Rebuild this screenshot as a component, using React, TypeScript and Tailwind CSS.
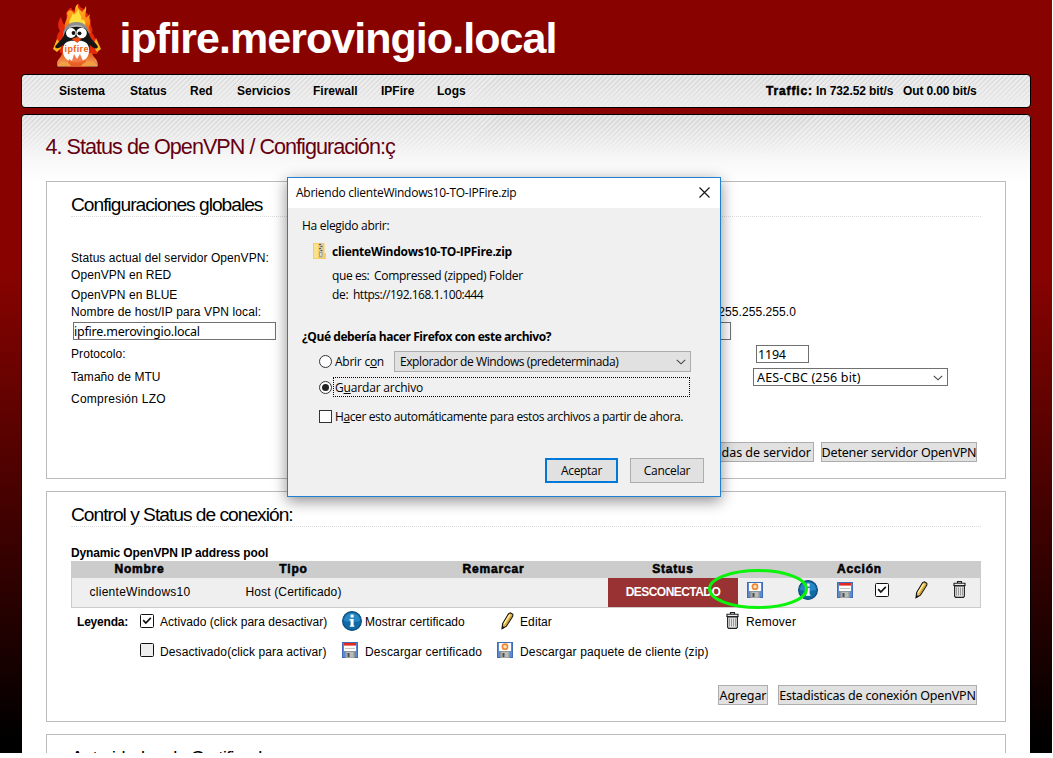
import React from "react";

const sans = "font-['Liberation_Sans',sans-serif]";
const ui = "font-['Open_Sans',sans-serif]";
const form = "font-['Noto_Sans',sans-serif]";

function Logo() {
  return (
    <svg width="52" height="66" viewBox="0 0 52 66" className="block">
      <defs>
        <linearGradient id="flame" x1="0" y1="0" x2="0" y2="1">
          <stop offset="0" stopColor="#ffbe20" />
          <stop offset=".6" stopColor="#ff8a14" />
          <stop offset="1" stopColor="#f2500c" />
        </linearGradient>
        <linearGradient id="base" x1="0" y1="0" x2="0" y2="1">
          <stop offset="0" stopColor="#e8581c" />
          <stop offset=".65" stopColor="#f0934a" />
          <stop offset="1" stopColor="#8c6a58" />
        </linearGradient>
      </defs>
      <path d="M7 42C3 36 5 31 8 28C5 23 6 18 9 14C10 18 11 21 13 22C15 18 15 13 14 10C17 6 18 3 20 6C21 9 24 7 24 3L27 1C27 6 33 4 32 9C34 11 36 8 36 14L39 17C37 22 42 25 40 30C43 33 43 38 48 44L45 51L8 50Z" fill="#e4280a" />
      <path d="M13 26C11 19 17 16 15 10C18 5 20 8 22 10C25 8 21 4 26 1C25 6 28 6 30 9C32 7 33 5 34 3C35 9 32 11 34 15L38 11C36 17 40 19 37 24L39 30H14Z" fill="url(#flame)" />
      <path d="M18 22C15 17 21 14 20 11C24 13 24 9 27 6C26 12 31 12 29 17C33 15 34 20 33 24H19Z" fill="#ffe03c" />
      <path d="M1 46L5 36L8 40L9 45L5 49ZM49 46L44 35L42 40L43 46L45 49Z" fill="#ffb31e" />
      <path d="M5 62C5 55 9 56 10 50L40 50C41 55 45 54 46 62L45 64H6Z" fill="url(#base)" />
      <path d="M11 36C10 25 16 19 24.5 19C33 19 38 25 37 36Z" fill="#8e8e8e" />
      <path d="M12 32C10 37 5 40 3 44C5 47 9 44 11 42L13 52H36L38 42C41 45 44 47 46 44C44 39 39 38 37 31C35 25 30 22.5 24.5 22.5C18 22.5 14 26 12 32Z" fill="#151515" />
      <path d="M16 26C18 20.5 31 20.5 33 26C28 23 21 23 16 26Z" fill="#b5b5b5" />
      <path d="M11 45C12 39 17 37 24 38C31 37 36 39 37 45C38 53 34 59 24 59C14 59 10 53 11 45Z" fill="#fff" />
      <circle cx="19" cy="30" r="5" fill="#fff" />
      <circle cx="29.5" cy="30" r="5.3" fill="#fff" />
      <circle cx="21.5" cy="30" r="1.9" fill="#111" />
      <circle cx="27.5" cy="30.3" r="1.9" fill="#111" />
      <path d="M19.5 36L25 34L29.5 35.5L25.5 40Z" fill="#f04a12" />
      <path d="M15 64L17 56L20 58L22 51L25 56L28 51L31 58L33 56L35 64Z" fill="#ed5a20" opacity=".8" />
      <path d="M5 63C9 57 16 58 19 63ZM29 63C33 57 42 57 46 63Z" fill="#f3a044" />
      <text x="12.5" y="49" fontSize="9" fontWeight="700" fill="#f06412" fontFamily="Liberation Sans" textLength="24">ipfire</text>
    </svg>
  );
}

function Disk({ zip = false }: { zip?: boolean }) {
  return (
    <svg width="16" height="16" viewBox="0 0 16 16" className="block shrink-0">
      <rect x=".5" y=".5" width="15" height="15" fill="#5b8ad2" stroke="#3f6db8" />
      <rect x="2" y="1" width="12" height="8" fill="#fff" />
      {zip ? (
        <circle cx="8" cy="4.7" r="2.6" fill="#ffe2c4" stroke="#f08632" strokeWidth="1.6" />
      ) : (
        <>
          <rect x="2" y="1" width="12" height="2.6" fill="#e32a20" />
          <path d="M3 6.5H13" stroke="#c4c4c4" />
        </>
      )}
      <rect x="3" y="9" width="10" height="7" fill="#8f9594" />
      <rect x="4.5" y="10" width="7" height="5.5" fill="#b9bdba" />
      <rect x="5.5" y="11" width="2" height="4" fill="#4b4e4d" />
    </svg>
  );
}

function Info() {
  return (
    <svg width="20" height="20" viewBox="0 0 20 20" className="block shrink-0">
      <circle cx="10" cy="10" r="9.4" fill="#0f6aa6" stroke="#0d4d7c" strokeWidth="1.2" />
      <path d="M2 10A8 8 0 0 1 18 10Q10 12 2 10Z" fill="#2787c4" />
      <rect x="8.6" y="3.6" width="3" height="2.9" fill="#fff" />
      <path d="M7.6 8H11.6V14.4H12.4V15.8H7.8V14.4H8.6V9.4H7.6Z" fill="#fff" />
    </svg>
  );
}

function Check({ on = true }: { on?: boolean }) {
  return (
    <svg width="14" height="14" viewBox="0 0 14 14" className="block shrink-0">
      <rect x=".5" y=".5" width="13" height="13" rx="1" fill={on ? "#fff" : "#eee"} stroke="#111" />
      {on && <path d="M3.2 6.2L5.8 9L10.8 3.8" fill="none" stroke="#111" strokeWidth="1.7" />}
    </svg>
  );
}

function Pencil() {
  return (
    <svg width="13" height="18" viewBox="0 0 13 18" className="block shrink-0">
      <path d="M1 16.8L1.6 11.6L7.6 1.6L9.4 .8L11.8 2.4L11.8 4.2L5.4 14.2Z" fill="#e6b84a" stroke="#111" strokeWidth="1.1" />
      <path d="M3 11.8L8.6 2.8" stroke="#fff0a8" strokeWidth="1.5" />
      <path d="M5 13L10.9 3.8" stroke="#b98c2c" strokeWidth="1" />
      <path d="M1 17L1.4 13.8L3.8 15.4Z" fill="#111" />
    </svg>
  );
}

function Trash() {
  return (
    <svg width="13" height="17" viewBox="0 0 13 17" className="block shrink-0">
      <path d="M4.5 2V.6H8.5V2" fill="none" stroke="#222" strokeWidth="1.1" />
      <path d="M1 4V2.2H12V4" fill="#eee" stroke="#222" strokeWidth="1.1" />
      <path d="M.3 4.5H12.7" stroke="#222" />
      <path d="M1.6 5H11.4V15.2L10.4 16.4H2.6L1.6 15.2Z" fill="#e4e4e4" stroke="#222" strokeWidth="1.1" />
      <path d="M3.5 6.5V14.5M5.5 6.5V14.5M7.5 6.5V14.5M9.5 6.5V14.5" stroke="#999" strokeWidth="1" />
    </svg>
  );
}

function ZipFile() {
  return (
    <svg width="13" height="16" viewBox="0 0 13 16" className="block">
      <path d="M0 0H11.5V10H13V16H0Z" fill="#f5cf63" />
      <path d="M1 1H5V15H1Z" fill="#fbe08d" />
      <rect x="6" y="0" width="3.5" height="15" fill="#c5c3b8" />
      <path d="M6 1.5H8M7.5 3.5H9.5M6 5.5H8M7.5 7.5H9.5" stroke="#5a5a5a" />
      <rect x="6.5" y="9.5" width="2.5" height="4" fill="#ddd" stroke="#999" strokeWidth=".8" />
    </svg>
  );
}

function Chevron() {
  return (
    <svg width="10" height="6" viewBox="0 0 10 6" className="block">
      <path d="M.8 .8L5 4.8L9.2 .8" fill="none" stroke="#444" strokeWidth="1.1" />
    </svg>
  );
}

function Heading({ children }: { children: React.ReactNode }) {
  return (
    <h2 className="h-[25px] border-b border-dotted border-[#dcdcdc] text-[19.2px] leading-[26px] tracking-[-1px] whitespace-nowrap">
      {children}
    </h2>
  );
}

function FormButton({ children, className }: { children: React.ReactNode; className: string }) {
  return (
    <button className={`${form} flex h-[20px] items-center justify-center border border-[#adadad] bg-[#e1e1e1] pt-[2px] text-[12.5px] leading-[18px] whitespace-nowrap ${className}`}>
      {children}
    </button>
  );
}

const menu = [
  { label: "Sistema", w: "w-[71px]" },
  { label: "Status", w: "w-[60px]" },
  { label: "Red", w: "w-[47px]" },
  { label: "Servicios", w: "w-[76px]" },
  { label: "Firewall", w: "w-[68px]" },
  { label: "IPFire", w: "w-[56px]" },
  { label: "Logs", w: "w-[60px]" },
];

const columns = [
  { label: "Nombre", w: "w-[137px]" },
  { label: "Tipo", w: "w-[171px]" },
  { label: "Remarcar", w: "w-[229px]" },
  { label: "Status", w: "w-[130px]" },
  { label: "Acción", w: "w-[243px]" },
];

function GlobalSettings() {
  return (
    <section className="h-[298px] border border-[#bbb] bg-white pt-[10px] pr-[24px] pl-[24px]">
      <Heading>Configuraciones globales</Heading>
      <div className="flex flex-col pt-[33px] leading-[16px] tracking-[0.07px] whitespace-nowrap">
        <div>Status actual del servidor OpenVPN:</div>
        <div className="mt-px">OpenVPN en RED</div>
        <div className="mt-[4px]">OpenVPN en BLUE</div>
        <div className="mt-px flex justify-between pr-[185px]">
          <span className="tracking-[0.11px]">Nombre de host/IP para VPN local:</span>
          <span>10.10.10.0/255.255.255.0</span>
        </div>
        <div className="mt-[2px] flex justify-between pr-[250px] pl-[2px]">
          <div className={`${form} h-[18px] w-[203px] border border-[#707070] text-[12.5px] leading-[18px] tracking-[-0.22px]`}>ipfire.merovingio.local</div>
          <div className="h-[18px] w-[203px] border border-[#707070]" />
        </div>
        <div className="mt-[5px] flex h-[18px] justify-between pr-[172px]">
          <span className="pt-px">Protocolo:</span>
          <div className={`${form} h-[18px] w-[53px] border border-[#707070] pl-px text-[12.5px] leading-[18px] tracking-[-0.2px]`}>1194</div>
        </div>
        <div className="mt-[5px] flex h-[18px] justify-between pr-[33px]">
          <span className="pt-px">Tamaño de MTU</span>
          <div className={`${form} flex h-[18px] w-[195px] items-center justify-between border border-[#707070] pt-[2px] pr-[4px] pl-[3px] text-[12.5px] leading-[16px] tracking-[0.18px]`}>
            AES-CBC (256 bit)
            <Chevron />
          </div>
        </div>
        <div className="mt-[5px] tracking-[0.25px]">Compresión LZO</div>
      </div>
      <div className="mt-[35px] flex justify-end gap-[7px] pr-[4px]">
        <FormButton className="w-[194px] tracking-[-0.05px]">Opciones avanzadas de servidor</FormButton>
        <FormButton className="w-[156px] tracking-[-0.18px]">Detener servidor OpenVPN</FormButton>
      </div>
    </section>
  );
}

function Connections() {
  return (
    <section className="mt-[12px] h-[231px] border border-[#bbb] bg-white px-[24px] pt-[10px]">
      <Heading>Control y Status de conexión:</Heading>
      <div className="mt-[18px] h-[16px] leading-[16px] font-bold tracking-[-0.13px] whitespace-nowrap">Dynamic OpenVPN IP address pool</div>
      <div className="relative w-[910px]">
        <div className="flex h-[17px] bg-[#ccc] leading-[16px] font-black tracking-[0.8px] [-webkit-text-stroke:0.55px_#000]">
          {columns.map((c) => (
            <div key={c.label} className={`${c.w} text-center`}>{c.label}</div>
          ))}
        </div>
        <div className="flex h-[30px] border border-t-0 border-[#ccc] bg-[#efefef] leading-[28px] whitespace-nowrap">
          <div className="w-[136px] text-center tracking-[0.26px]">clienteWindows10</div>
          <div className="w-[171px] text-center tracking-[0.15px]">Host (Certificado)</div>
          <div className="w-[229px]" />
          <div className="h-[29px] w-[130px] bg-[#993333] text-center font-bold tracking-[-0.55px] text-white">DESCONECTADO</div>
          <div className="flex h-[25px] items-center pl-[9px]">
            <span className="-mt-px"><Disk zip /></span>
            <span className="-mt-px ml-[35px]"><Info /></span>
            <span className="-mt-px ml-[19px]"><Disk /></span>
            <span className="-mt-px ml-[22px]"><Check /></span>
            <span className="-mt-px ml-[26px]"><Pencil /></span>
            <span className="-mt-[2px] ml-[25px]"><Trash /></span>
          </div>
        </div>
        <svg width="104" height="44" viewBox="0 0 104 44" className="absolute top-[6px] left-[635px]">
          <ellipse cx="52" cy="22" rx="48.5" ry="18.5" fill="none" stroke="#0bf30b" strokeWidth="3" />
        </svg>
      </div>
      <div className="flex h-[28px] items-center pl-[6px] whitespace-nowrap">
        <b className="w-[63px] tracking-[-0.2px]">Leyenda:</b>
        <div className="flex w-[202px] items-center gap-[6px] tracking-[0.04px]"><span className="-mt-[2px]"><Check /></span>Activado (click para desactivar)</div>
        <div className="flex w-[159px] items-center gap-[3px] tracking-[0.06px]"><span className="-mt-[2px]"><Info /></span>Mostrar certificado</div>
        <div className="flex w-[225px] items-center gap-[6px] tracking-[0.1px]"><span className="-mt-[2px]"><Pencil /></span>Editar</div>
        <div className="flex items-center gap-[7px] tracking-[0.2px]"><span className="-mt-[3px]"><Trash /></span>Remover</div>
      </div>
      <div className="flex h-[32px] items-center pl-[69px] whitespace-nowrap">
        <div className="flex w-[202px] items-center gap-[6px] tracking-[0.1px]"><span className="-mt-[4px]"><Check on={false} /></span>Desactivado(click para activar)</div>
        <div className="flex w-[155px] items-center gap-[7px] tracking-[0.18px]"><span className="-mt-[4px]"><Disk /></span>Descargar certificado</div>
        <div className="flex items-center gap-[7px] tracking-[0.15px]"><span className="-mt-[4px]"><Disk zip /></span>Descargar paquete de cliente (zip)</div>
      </div>
      <div className="mt-[17px] flex justify-end gap-[10px] pr-[4px]">
        <FormButton className="w-[50px] tracking-[-0.1px]">Agregar</FormButton>
        <FormButton className="w-[199px] tracking-[-0.19px]">Estadisticas de conexión OpenVPN</FormButton>
      </div>
    </section>
  );
}

function DownloadDialog() {
  return (
    <div className={`${ui} absolute top-[177px] left-[287px] h-[320px] w-[434px] border border-[#1f7fd0] bg-[#f0f0f0] text-[12px] leading-[16px] tracking-[-0.3px] whitespace-nowrap shadow-[0_4px_14px_rgba(0,0,0,0.45)]`}>
      <div className="flex h-[30px] items-center justify-between bg-white pr-[10px] pl-[8px]">
        <span className="tracking-[-0.26px]">Abriendo clienteWindows10-TO-IPFire.zip</span>
        <svg width="11" height="11" viewBox="0 0 11 11" className="mb-[2px]">
          <path d="M.5 .5L10.5 10.5M10.5 .5L.5 10.5" stroke="#111" strokeWidth="1.1" />
        </svg>
      </div>
      <div className="pt-[10px] pl-[14px]">Ha elegido abrir:</div>
      <div className="mt-[9px] flex h-[18px] items-center pl-[25px]">
        <span className="-mt-[2px]"><ZipFile /></span>
        <b className="ml-[6px] tracking-[-0.27px]">clienteWindows10-TO-IPFire.zip</b>
      </div>
      <div className="mt-[7px] flex pl-[44px]"><span className="w-[42px] tracking-[-0.4px]">que es:</span>Compressed (zipped) Folder</div>
      <div className="mt-[3px] flex pl-[44px] tracking-[-0.5px]"><span className="w-[21px] tracking-[-0.3px]">de:</span>https://192.168.1.100:444</div>
      <div className="mt-[26px] pl-[14px] font-bold tracking-[-0.42px]">¿Qué debería hacer Firefox con este archivo?</div>
      <div className="mt-[6px] flex h-[21px] items-center pl-[31px]">
        <span className="h-[13px] w-[13px] rounded-full border border-[#333] bg-white" />
        <span className="ml-[3px] w-[59px] tracking-[-0.25px]">Abrir c<u>o</u>n</span>
        <div className="flex h-[21px] w-[297px] items-center justify-between border border-[#adadad] bg-[#e1e1e1] pr-[4px] pl-[5px] tracking-[-0.42px]">
          Explorador de Windows (predeterminada)
          <Chevron />
        </div>
      </div>
      <div className="mt-[5px] flex h-[20px] items-center pl-[31px]">
        <span className="flex h-[13px] w-[13px] items-center justify-center rounded-full border border-[#333] bg-white">
          <span className="h-[7px] w-[7px] rounded-full bg-[#222]" />
        </span>
        <span className="ml-px h-[20px] w-[357px] border border-dotted border-black pl-px leading-[20px] tracking-[-0.17px]">G<u>u</u>ardar archivo</span>
      </div>
      <div className="mt-[12px] flex h-[16px] items-center pl-[31px]">
        <span className="-mt-[2px] h-[13px] w-[13px] border border-[#333] bg-white" />
        <span className="ml-[3px] tracking-[-0.4px]">H<u>a</u>cer esto automáticamente para estos archivos a partir de ahora.</span>
      </div>
      <div className="mt-[33px] flex justify-end gap-[12px] pr-[16px]">
        <button className="h-[25px] w-[73px] border-2 border-[#0078d7] bg-[#e1e1e1]">Aceptar</button>
        <button className="h-[25px] w-[74px] border border-[#adadad] bg-[#e1e1e1]">Cancelar</button>
      </div>
    </div>
  );
}

export default function App() {
  return (
    <div className={`${sans} relative h-[758px] w-[1053px] overflow-hidden bg-white text-[12px] text-black`}>
      <div className="h-[753px] w-[1052px] overflow-hidden bg-[linear-gradient(to_bottom,#880300_0px,#880300_270px,#000_740px)] pr-[21px] pl-[21px]">
        <header className="flex h-[74px] pt-[3px] pl-[31px]">
          <Logo />
          <h1 className="ml-[15.5px] h-[50px] pt-[10px] text-[43px] leading-[50px] font-bold tracking-[-0.95px] whitespace-nowrap text-white">ipfire.merovingio.local</h1>
        </header>
        <nav className="flex h-[34px] items-center rounded-[4px] border border-black bg-[linear-gradient(to_bottom,rgba(240,240,240,0)_0px,rgba(240,240,240,0.8)_34px),repeating-linear-gradient(135deg,#dadada_0px,#dadada_1.7px,#ebebeb_1.7px,#ebebeb_3.54px)] pl-[37px] font-bold whitespace-nowrap">
          {menu.map((m) => (
            <a key={m.label} className={m.w}>{m.label}</a>
          ))}
          <div className="ml-[269px] flex">
            <span className="w-[50px] font-black tracking-[0.85px] [-webkit-text-stroke:0.5px_#000]">Traffic:</span>
            <span className="w-[87px] tracking-[-0.1px]">In 732.52 bit/s</span>
            <span className="tracking-[-0.12px]">Out 0.00 bit/s</span>
          </div>
        </nav>
        <main className="mt-[6px] h-[700px] rounded-t-[4px] border border-black bg-white bg-[linear-gradient(to_bottom,rgba(250,250,250,0)_0px,rgba(248,248,248,1)_45px,#fff_68px),repeating-linear-gradient(135deg,#d6d6d6_0px,#d6d6d6_1.7px,#e8e8e8_1.7px,#e8e8e8_3.54px)] pr-[24px] pl-[24px]">
          <h1 className="-ml-[0.5px] h-[66px] pt-[19px] text-[21.6px] leading-[26px] tracking-[-0.98px] whitespace-nowrap text-[#66000f]">4. Status de OpenVPN / Configuración:ç</h1>
          <GlobalSettings />
          <Connections />
          <section className="mt-[12px] h-[100px] border border-[#bbb] bg-white px-[24px] pt-[10px]">
            <Heading>Autoridades de Certificado</Heading>
          </section>
        </main>
      </div>
      <DownloadDialog />
    </div>
  );
}
